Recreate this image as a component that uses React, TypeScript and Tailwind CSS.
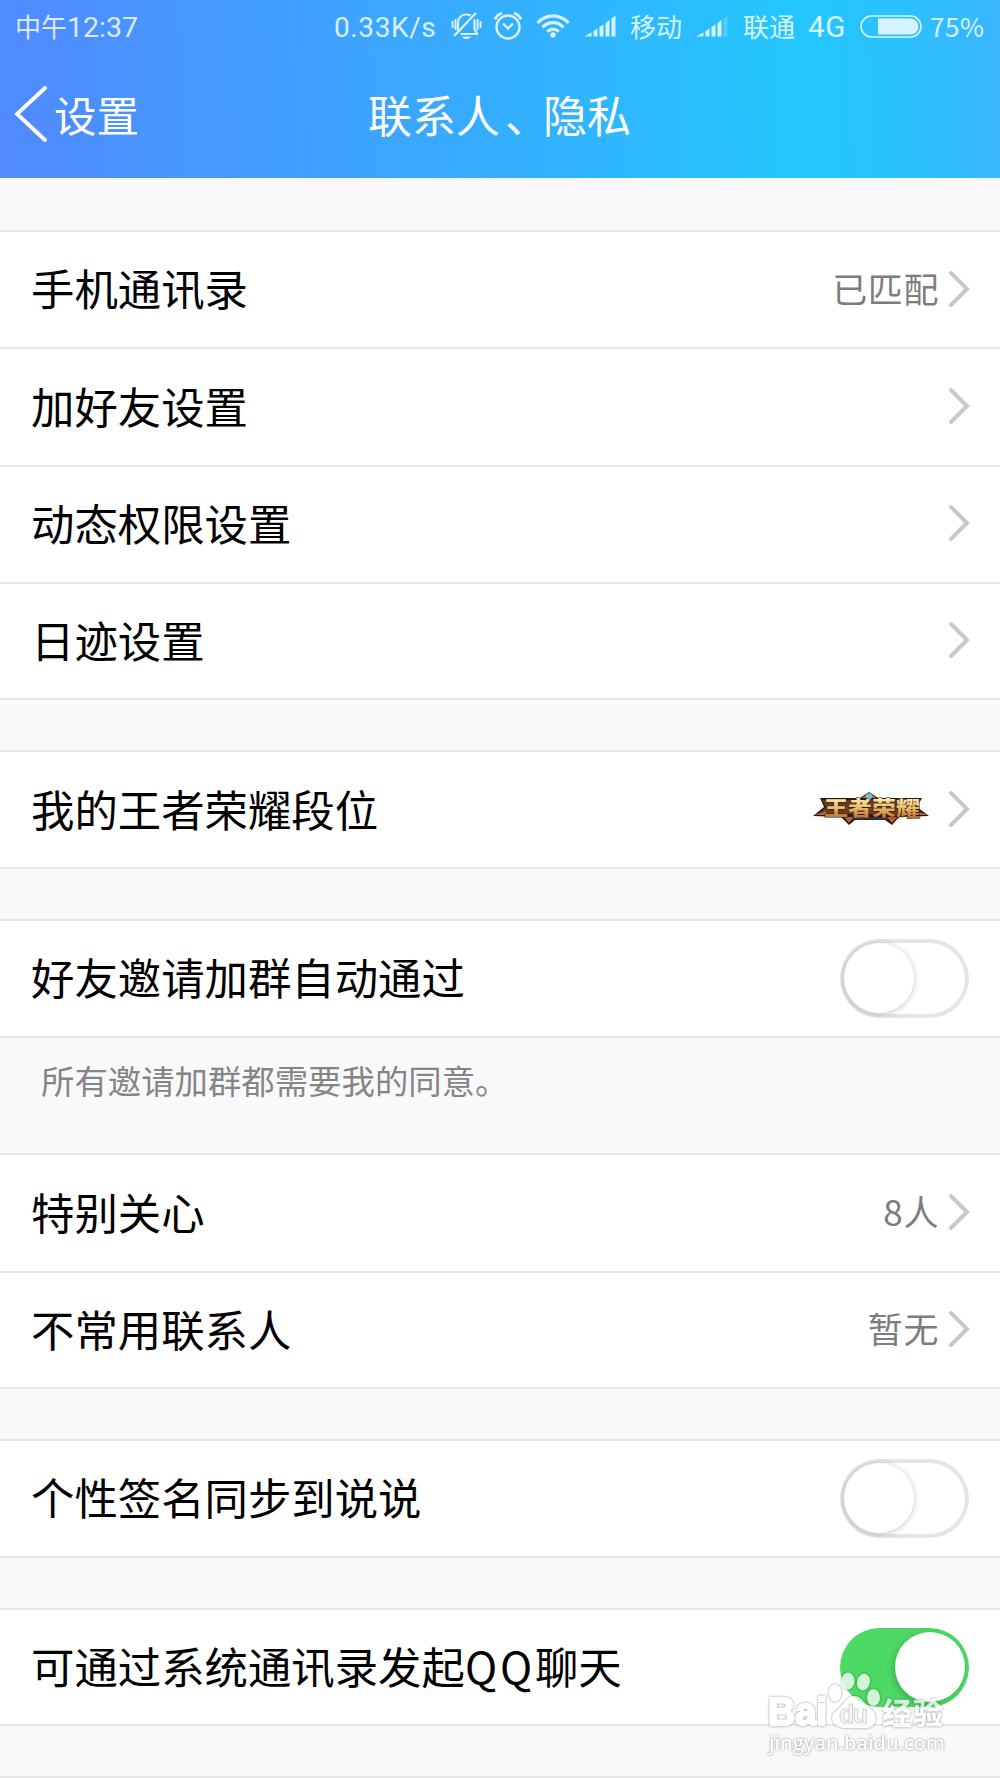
import clsx from "clsx";

function Chevron() {
    return (
        <svg className="shrink-0 mt-[-2px]" width="22" height="38" viewBox="0 0 22 38" fill="none">
            <path d="M3 3L19 19L3 35" stroke="#c8c8c8" strokeWidth="4" strokeLinecap="round"/>
        </svg>
    );
}

function Switch({ on = false }: { on?: boolean }) {
    return (
        <div
            className={clsx(
                "flex items-center w-[129px] h-[79px] mr-px px-1 rounded-full shrink-0 overflow-hidden",
                on ? "bg-[#4cd964] justify-end" : "bg-white shadow-[inset_0_0_0_4px_#e5e5e5]"
            )}
        >
            <div className={clsx("w-[70px] h-[70px] rounded-full bg-white", on ? "shadow-[-2px_2px_7px_rgba(0,0,0,0.2)]" : "shadow-[0_1px_6px_rgba(0,0,0,0.24)]")}/>
        </div>
    );
}

function Signal({ weak = false }: { weak?: boolean }) {
    return (
        <svg width="32" height="22" viewBox="0 0 32 22" fill="currentColor">
            <path d="M0 21.500L7.500 17.500V21.500Z"/>
            <path d="M9.500 16L13.500 13.500V21.500H9.500Z"/>
            <path d="M15.500 12L19.500 9.500V21.500H15.500Z"/>
            <path d="M21.500 8L25.500 5V21.500H21.500Z"/>
            <path d="M27.500 3.500L31.500 0.500V21.500H27.500Z" opacity={weak ? 0.25 : 1}/>
        </svg>
    );
}

function MutedBell() {
    return (
        <svg width="31" height="28" viewBox="0 0 31 28" fill="none" stroke="currentColor" strokeWidth="2.200">
            <path d="M7 19V11C7 5.500 10.500 2.500 15 2.500C17 2.500 18.500 3 19.800 3.800M23 7.500C23.400 8.500 23.500 9.500 23.500 10.500V17L26 22H9.500M25 1L3 24"/>
            <path d="M1.500 9V16M4.500 7V18M26.500 7V18M29.500 9V16" strokeWidth="2"/>
            <path d="M11 24.500H20C19 26.500 17.500 27 15.500 27C13.500 27 12 26.500 11 24.500Z" fill="currentColor" stroke="none"/>
        </svg>
    );
}

function Alarm() {
    return (
        <svg className="ml-[12px]" width="28" height="28" viewBox="0 0 28 28" fill="none" stroke="currentColor" strokeWidth="2.400">
            <circle cx="14" cy="15" r="11.500"/>
            <path d="M9 11.500L14 16.500L19 11.500"/>
            <path d="M1 7.500C2.200 4.500 4.500 2.200 8 1.200M27 7.500C25.800 4.500 23.500 2.200 20 1.200" strokeWidth="2.800"/>
        </svg>
    );
}

function Wifi() {
    return (
        <svg className="ml-[14px]" width="34" height="24" viewBox="0 0 34 24" fill="none" stroke="currentColor" strokeWidth="3.200">
            <path d="M1.500 9C10 -0.500 24 -0.500 32.500 9"/>
            <path d="M6.500 13.500C12.500 7 21.500 7 27.500 13.500"/>
            <path d="M11.300 17.700C14.500 14.300 19.500 14.300 22.700 17.700"/>
            <circle cx="17" cy="21" r="2.700" fill="currentColor" stroke="none"/>
        </svg>
    );
}

function Battery() {
    return (
        <svg className="ml-[12px]" width="62" height="23" viewBox="0 0 62 23" fill="none">
            <rect x="1" y="1" width="60" height="21" rx="10.500" stroke="currentColor" strokeWidth="1.600"/>
            <path d="M18 3.500H50.500A8 8 0 0 1 50.500 19.500H18Z" fill="currentColor"/>
        </svg>
    );
}

function GameLogo() {
    return (
        <svg className="mr-[18px] mt-[-3px]" width="118" height="36" viewBox="0 0 118 36">
            <defs>
                <linearGradient id="gold" x1="0" y1="0" x2="0" y2="1">
                    <stop offset="0.150" stopColor="#fff3b4"/>
                    <stop offset="0.550" stopColor="#e8b964"/>
                    <stop offset="1" stopColor="#a9501b"/>
                </linearGradient>
            </defs>
            <path d="M8 8L48 8L57 2L66 8L110 8L105 17L117 26L87 27L80 35L73 30L43 30L37 35L29 27L1 26L12 17Z" fill="#2b1a18"/>
            <path d="M10 10H108L103 17L109 24H8L14 17Z" fill="#6c3a20"/>
            <path d="M32 27H42L37 33ZM75 27H85L80 33ZM2 25L14 21V25ZM116 25L104 21V25Z" fill="#b8642c"/>
            <path d="M40 28.500H76" stroke="#243c66" strokeWidth="2"/>
            <path d="M50 8L57 2.500L64 8Z" fill="#a57845"/>
            <circle cx="57" cy="6.500" r="3" fill="#77bfd8"/>
            <text x="12" y="25.500" textLength="96" lengthAdjust="spacingAndGlyphs" fontSize="20" fontWeight="900" fill="url(#gold)" stroke="#2b1a18" strokeWidth="1" paintOrder="stroke">王者荣耀</text>
        </svg>
    );
}

function Row({
    title,
    value,
    children,
}: {
    title: React.ReactNode;
    value?: string;
    children?: React.ReactNode;
}) {
    return (
        <div className="flex items-center justify-between h-[117.300px] last:h-[116.600px] pl-[31px] pr-[30px] border-t-2 border-[#e6e6e7]">
            <p className="pb-[3px] text-[43.400px] leading-none text-black whitespace-nowrap">{title}</p>
            <div className="flex items-center">
                {value && <p className="pb-[5px] mr-[9px] text-[35px] leading-none tracking-[0.600px] text-[#7d7d7d]">{value}</p>}
                {children ?? <Chevron/>}
            </div>
        </div>
    );
}

function Group({ className, children }: { className?: string; children: React.ReactNode }) {
    return (
        <div className={clsx("bg-white", className)}>
            {children}
        </div>
    );
}

// Strip of page background between two groups, it closes the group above
function Gap({ children }: { children?: React.ReactNode }) {
    return <div className={clsx("border-t-2 border-[#e6e6e7]", children ? "h-[117.600px]" : "h-[52px]")}>{children}</div>;
}

function Watermark() {
    return (
        <svg className="absolute left-[764px] top-[1668px] [filter:drop-shadow(0_0_1px_rgba(0,0,0,0.6))]" width="190" height="92" viewBox="0 0 190 92" fill="#ffffff" opacity="0.740">
            <g stroke="#ffffff" strokeWidth="2.500" strokeLinejoin="round">
                <text x="4" y="57" fontFamily="Liberation Sans, sans-serif" fontWeight="700" fontSize="39" textLength="59" lengthAdjust="spacingAndGlyphs">Bai</text>
                <text x="118" y="56" fontWeight="700" fontSize="30" textLength="61" strokeWidth="0.600">经验</text>
            </g>
            <ellipse cx="71" cy="25" rx="6.500" ry="9"/>
            <ellipse cx="84" cy="13" rx="6.500" ry="8.500"/>
            <ellipse cx="99.500" cy="14" rx="6.500" ry="8.500" transform="rotate(12 99.500 14)"/>
            <ellipse cx="109.500" cy="29.500" rx="6.500" ry="8.500"/>
            <path d="M90 28C98 28 100 36 107 41C114 46 114 59 103 60C97 60.500 84 60.500 79 60C66 58 65 47 74 41C81 36 82 28 90 28Z"/>
            <text x="75" y="55" fontFamily="Liberation Sans, sans-serif" fontWeight="700" fontSize="25" textLength="29" fill="#f4f4f4" stroke="#c4c4c4" strokeWidth="1">du</text>
            <text x="5" y="82" fontFamily="Open Sans, sans-serif" fontSize="20" fontWeight="600" textLength="176" lengthAdjust="spacingAndGlyphs">jingyan.baidu.com</text>
        </svg>
    );
}

export default function App() {
    return (
        <div className="relative w-[1000px] h-[1778px] overflow-hidden bg-[#f9f9fb] font-['Noto_Sans_CJK_SC',sans-serif]">
            <header className="h-[178px] text-white bg-[linear-gradient(87deg,#5189ff_0%,#3ea1ff_33%,#2fb6ff_60%,#24c6ff_79%,#28c3ff_88%,#3ab5ff_100%)]">
                <div className="flex items-center h-[52px] pl-[15px] text-[26px] leading-none text-white/80 whitespace-nowrap">
                    <p className="w-[319px] mt-[3px]">中午<span className="font-[Roboto] text-[28.500px]">12:37</span></p>
                    <p className="w-[117px] mt-[3px] font-[Roboto] text-[28px] tracking-[0.6px]">0.33K/s</p>
                    <MutedBell/>
                    <Alarm/>
                    <Wifi/>
                    <div className="ml-[14px]"><Signal/></div>
                    <p className="ml-[14px] w-[52px]">移动</p>
                    <div className="ml-[14px]"><Signal weak/></div>
                    <p className="ml-[15px] w-[52px]">联通</p>
                    <p className="ml-[13px] w-[40px] mt-[3px] font-[Roboto] text-[29.500px] tracking-[0.6px]">4G</p>
                    <Battery/>
                    <p className="ml-[8px] tracking-[0.6px]">75%</p>
                </div>
                <div className="grid grid-cols-3 items-center h-[126px] pb-[2px]">
                    <div className="flex items-center pl-[14px] gap-[7px]">
                        <svg width="33" height="56" viewBox="0 0 33 56" fill="none">
                            <path d="M31 2L3 28L31 54" stroke="white" strokeWidth="3.800" strokeLinecap="round"/>
                        </svg>
                        <p className="text-[42.500px] leading-none">设置</p>
                    </div>
                    <p className="text-[44px] leading-none text-center whitespace-nowrap">联系人<span className="relative left-[5px]">、</span><span className="relative left-[-1px]">隐私</span></p>
                </div>
            </header>

            <Group className="mt-[52px]">
                <Row title="手机通讯录" value="已匹配"/>
                <Row title="加好友设置"/>
                <Row title="动态权限设置"/>
                <Row title="日迹设置"/>
            </Group>
            <Gap/>
            <Group>
                <Row title="我的王者荣耀段位">
                    <GameLogo/>
                    <Chevron/>
                </Row>
            </Group>
            <Gap/>
            <Group>
                <Row title="好友邀请加群自动通过"><Switch/></Row>
            </Group>
            <Gap>
                <p className="pt-[25px] pl-[41px] text-[33.400px] leading-none text-[#858585]">所有邀请加群都需要我的同意。</p>
            </Gap>
            <Group>
                <Row title="特别关心" value="8人"/>
                <Row title="不常用联系人" value="暂无"/>
            </Group>
            <Gap/>
            <Group>
                <Row title="个性签名同步到说说"><Switch/></Row>
            </Group>
            <Gap/>
            <Group>
                <Row title={<>可通过系统通讯录发起<span className="tracking-[2.8px]">QQ</span>聊天</>}><Switch on/></Row>
            </Group>
            <Gap/>
            <div className="border-t-2 border-[#e6e6e7]"/>
            <Watermark/>
        </div>
    );
}
